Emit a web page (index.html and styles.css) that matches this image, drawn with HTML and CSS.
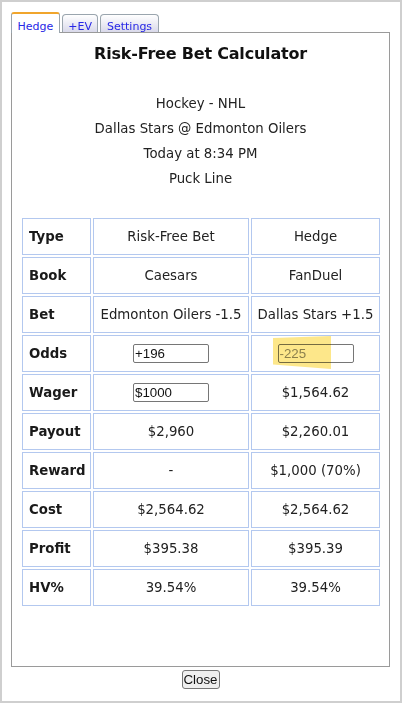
FILE: index.html
```html
<!DOCTYPE html>
<html lang="en">
<head>
    <meta charset="UTF-8">
    <meta name="viewport" content="width=device-width, initial-scale=1.0">
    <title>Risk-Free Bet Calculator</title>
    <link rel="stylesheet" href="styles.css">
</head>
<body>
    <div class="popup">
        <div class="tabs">
            <a class="tab active" href="#">Hedge</a>
            <a class="tab" href="#">+EV</a>
            <a class="tab" href="#">Settings</a>
        </div>
        <div class="panel">
            <h2 class="title">Risk-Free Bet Calculator</h2>
            <div class="event">
                <div>Hockey - NHL</div>
                <div>Dallas Stars @ Edmonton Oilers</div>
                <div>Today at 8:34 PM</div>
                <div>Puck Line</div>
            </div>
            <table class="calc">
                <colgroup>
                    <col class="col-label">
                    <col class="col-bet">
                    <col class="col-hedge">
                </colgroup>
                <tr><th>Type</th><td>Risk-Free Bet</td><td>Hedge</td></tr>
                <tr><th>Book</th><td>Caesars</td><td>FanDuel</td></tr>
                <tr><th>Bet</th><td>Edmonton Oilers -1.5</td><td>Dallas Stars +1.5</td></tr>
                <tr>
                    <th>Odds</th>
                    <td><input type="text" class="field" value="+196"></td>
                    <td class="marked">
                        <input type="text" class="field readonly" value="-225" readonly>
                        <span class="highlight"></span>
                    </td>
                </tr>
                <tr><th>Wager</th><td><input type="text" class="field" value="$1000"></td><td>$1,564.62</td></tr>
                <tr><th>Payout</th><td>$2,960</td><td>$2,260.01</td></tr>
                <tr><th>Reward</th><td>-</td><td>$1,000 (70%)</td></tr>
                <tr><th>Cost</th><td>$2,564.62</td><td>$2,564.62</td></tr>
                <tr><th>Profit</th><td>$395.38</td><td>$395.39</td></tr>
                <tr><th>HV%</th><td>39.54%</td><td>39.54%</td></tr>
            </table>
        </div>
        <div class="actions">
            <button type="button" class="close-button" onclick="window.close()">Close</button>
        </div>
    </div>
</body>
</html>
```

FILE: styles.css
```css
html, body {
    height: 100%;
}

body {
    margin: 0;
    box-sizing: border-box;
    border: 2px solid #cfcfcf;
    background-color: #fff;
    font-family: 'DejaVu Sans', Verdana, sans-serif;
    font-size: 13.3px;
    color: #222;
}

.popup {
    padding: 10px 10px 0 9px;
}

/* tabs */

.tabs {
    display: flex;
    align-items: flex-end;
    gap: 2px;
    height: 20px;
}

.tab {
    display: block;
    padding: 7px 5.5px 0;
    font-size: 11px;
    line-height: 10px;
    color: #2727e6;
    text-decoration: none;
    border: 1px solid #9aa5ae;
    border-bottom: none;
    border-radius: 4px 4px 0 0;
    background: linear-gradient(#ffffff, #d9d9ea);
}

.tab.active {
    position: relative;
    z-index: 1;
    margin-bottom: -1px;
    padding-top: 8px;
    padding-bottom: 1px;
    border-top: 2px solid #f0a52c;
    border-radius: 3px 3px 0 0;
    background: #fff;
}

/* panel */

.panel {
    box-sizing: border-box;
    height: 635px;
    padding: 11px 8px 8px;
    border: 1px solid #9a9a9a;
}

.title {
    margin: 0;
    font-size: 16px;
    line-height: 20px;
    font-weight: bold;
    text-align: center;
    color: #111;
    letter-spacing: -0.2px;
}

.event {
    margin-top: 27px;
    line-height: 25px;
    text-align: center;
}

.calc {
    margin-top: 25px;
    width: 362px;
    table-layout: fixed;
    border-collapse: separate;
    border-spacing: 2px;
}

.col-label {
    width: 69px;
}

.col-bet {
    width: 156px;
}

.col-hedge {
    width: 129px;
}

.calc th,
.calc td {
    height: 35px;
    padding: 0;
    border: 1px solid #b3c8ef;
    text-align: center;
    vertical-align: middle;
    white-space: nowrap;
}

.calc th {
    padding-left: 6px;
    text-align: left;
    font-weight: bold;
    color: #1a1a1a;
}

.field {
    box-sizing: border-box;
    width: 76px;
    height: 19px;
    padding: 1px 1px;
    font-family: 'Liberation Sans', Arial, sans-serif;
    font-size: 13.3px;
    color: #111;
    border: 1px solid #767676;
    border-radius: 2px;
    vertical-align: middle;
}

.field.readonly {
    color: #8c8c8c;
}

.marked {
    position: relative;
}

.highlight {
    position: absolute;
    left: 21px;
    top: 0;
    width: 58px;
    height: 33px;
    background-color: #fde78a;
    mix-blend-mode: multiply;
    clip-path: polygon(0 6%, 100% 0, 100% 100%, 0 86%);
    pointer-events: none;
}

/* bottom */

.actions {
    text-align: center;
    padding-top: 3px;
}

.close-button {
    height: 19px;
    padding: 0 1px;
    font-family: 'Liberation Sans', Arial, sans-serif;
    font-size: 13.3px;
    line-height: 15px;
    color: #111;
    background-color: #efefef;
    border: 1px solid #767676;
    border-radius: 3px;
}
```
